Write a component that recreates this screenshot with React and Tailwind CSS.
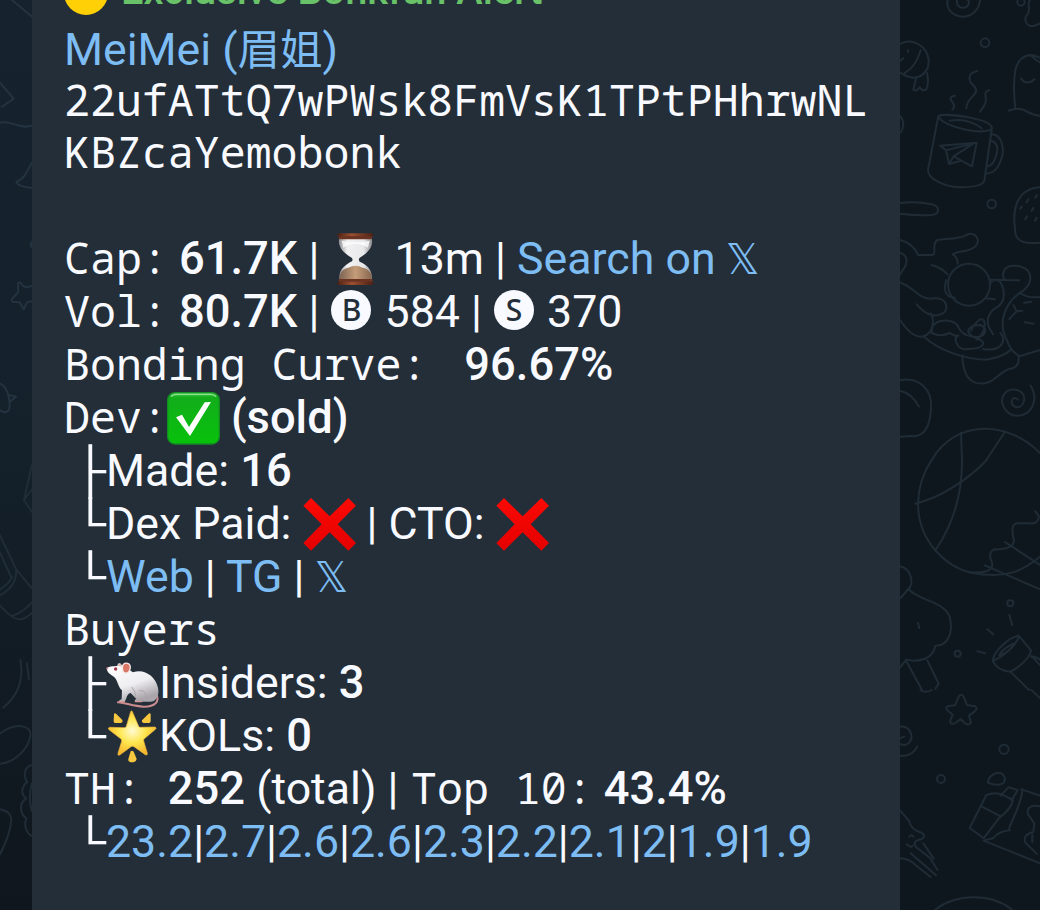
import { clsx } from "clsx";

const holders = ["23.2", "2.7", "2.6", "2.6", "2.3", "2.2", "2.1", "2", "1.9", "1.9"];

function Line({ className, children }) {
  return <div className={clsx("whitespace-pre", className || "h-[53px]")}>{children}</div>;
}

function Mono({ className, children }) {
  return <span className={clsx("font-['Noto_Sans_Mono','DejaVu_Sans_Mono',monospace] text-[43.25px] leading-none", className)}>{children}</span>;
}

function Bold({ className, children }) {
  return <span className={clsx("text-[45.3px] leading-none font-medium", className)}>{children}</span>;
}

function Link({ className, children }) {
  return <a className={clsx("text-[#7dbdf3]", className)}>{children}</a>;
}

function XMark() {
  return <span className="ml-[-1px] inline-block w-[31px] font-['DejaVu_Sans',sans-serif] text-[42px] leading-none">𝕏</span>;
}

function Branch({ children }) {
  return (
    <span className="ml-[18px] inline-block w-[24px] origin-right scale-x-[1.3] scale-y-[1.12] font-['Noto_Sans_Mono','DejaVu_Sans_Mono',monospace] text-[40px] leading-none">
      {children}
    </span>
  );
}

function Badge({ children }) {
  return (
    <span className="mr-[2px] ml-[1px] inline-flex h-10 w-10 items-center justify-center rounded-full bg-[#f8faff] align-[6px] font-['Noto_Sans',sans-serif] text-[30px] leading-none font-medium text-[#232e39]">
      {children}
    </span>
  );
}

function Emoji({ className, children }) {
  return (
    <svg viewBox="0 0 159 159" className={clsx("inline-block h-[53px] w-[53px] align-[-12px]", className)}>
      {children}
    </svg>
  );
}

function Hourglass() {
  return (
    <Emoji>
      <defs>
        <linearGradient id="wood" x1="0" x2="1">
          <stop offset="0" stopColor="#4a2014" />
          <stop offset=".4" stopColor="#9c5030" />
          <stop offset="1" stopColor="#4a2014" />
        </linearGradient>
        <linearGradient id="glass" x1="0" x2="1">
          <stop offset="0" stopColor="#8f8f92" />
          <stop offset=".25" stopColor="#f1f1f2" />
          <stop offset=".75" stopColor="#e8e8ea" />
          <stop offset="1" stopColor="#8b8a8c" />
        </linearGradient>
        <linearGradient id="sand" x1="0" x2="1">
          <stop offset="0" stopColor="#7d6453" />
          <stop offset=".5" stopColor="#c59c79" />
          <stop offset="1" stopColor="#86674f" />
        </linearGradient>
      </defs>
      <path d="M28 16H125C132 42 111 61 89 74Q84 79 89 86C109 94 130 111 125 141H29C23 111 48 94 66 85Q70 79 65 74C43 62 21 42 28 16Z" fill="url(#glass)" />
      <path d="M29 140C26 121 38 107 55 104Q77 93 98 104C116 107 129 122 124 140Z" fill="url(#sand)" />
      <path d="M35 23Q76 33 119 23L114 44Q76 20 40 44Z" fill="#fff" opacity=".75" />
      <rect x="22" y="1" width="108" height="10" rx="5" fill="url(#wood)" />
      <rect x="26" y="10" width="100" height="9" rx="4" fill="#6b3321" />
      <rect x="26" y="138" width="102" height="9" rx="4" fill="#6b3321" />
      <rect x="22" y="146" width="108" height="10" rx="5" fill="url(#wood)" />
    </Emoji>
  );
}

function Check() {
  return (
    <Emoji className="ml-[-1px]">
      <defs>
        <linearGradient id="green" x1="0" y1="0" x2="0" y2="1">
          <stop offset="0" stopColor="#4cc84f" />
          <stop offset=".1" stopColor="#12ad1b" />
          <stop offset="1" stopColor="#08c20b" />
        </linearGradient>
      </defs>
      <rect x="2" y="2" width="155" height="154" rx="22" fill="url(#green)" stroke="#138c23" strokeWidth="4" />
      <path d="M13 14Q17 7 28 7H131Q142 7 147 14" fill="none" stroke="#8be28d" strokeWidth="4" />
      <path d="M27 76L45 68L66 105L113 31L132 30L69 132Z" fill="#fff" />
    </Emoji>
  );
}

function Cross() {
  return (
    <Emoji>
      <defs>
        <linearGradient id="red" x1="0" y1="0" x2="0" y2="1">
          <stop offset="0" stopColor="#fb0a04" />
          <stop offset="1" stopColor="#e40000" />
        </linearGradient>
      </defs>
      <path d="M24 0L80 55L136 0L159 23L104 79L159 135L136 158L80 103L24 158L1 135L56 79L1 23Z" fill="url(#red)" />
    </Emoji>
  );
}

function Mouse() {
  return (
    <Emoji>
      <defs>
        <linearGradient id="fur" x1="0" y1="0" x2=".5" y2="1">
          <stop offset="0" stopColor="#fff" />
          <stop offset=".6" stopColor="#eeedf0" />
          <stop offset="1" stopColor="#a9a5ab" />
        </linearGradient>
      </defs>
      <path d="M151 112C162 133 147 150 112 149C82 147 60 138 36 136" fill="none" stroke="#c98b8e" strokeWidth="6" strokeLinecap="round" />
      <path d="M38 35C30 18 43 15 49 28" fill="#e5b3ac" stroke="#f4eeee" strokeWidth="3" />
      <path d="M2 34C8 29 25 26 44 28C56 30 68 37 81 46C113 34 148 56 156 92C161 116 150 135 132 134L88 134Q83 130 91 126L74 108Q64 110 61 124L56 135H39Q38 129 47 127L48 100C38 91 36 77 29 65C20 54 4 52 2 34Z" fill="url(#fur)" />
      <path d="M77 90Q91 105 89 123M99 101Q119 98 120 119" fill="none" stroke="#aaa5aa" strokeWidth="3" />
      <path d="M50 40C46 23 55 16 65 19C78 23 73 45 62 48Q53 50 50 40Z" fill="#db7767" stroke="#f6e8e7" strokeWidth="4" />
      <circle cx="29" cy="36" r="5" fill="#a63245" />
      <circle cx="4" cy="34" r="3" fill="#d8888b" />
      <path d="M40 134H55M88 134H107" stroke="#d99995" strokeWidth="4" strokeLinecap="round" />
    </Emoji>
  );
}

function GlowingStar() {
  return (
    <Emoji>
      <defs>
        <radialGradient id="gold" cx=".5" cy=".45" r=".55">
          <stop offset="0" stopColor="#fffbd4" />
          <stop offset=".5" stopColor="#ffe64e" />
          <stop offset="1" stopColor="#f5b52d" />
        </radialGradient>
      </defs>
      <path d="M79 5L98 49Q99 52 103 52L147 51Q154 54 147 59L115 86Q112 89 113 93L124 130Q125 137 118 134L84 110Q79 107 75 110L41 135Q34 138 36 130L47 94Q48 89 44 86L9 59Q4 54 11 52L55 53Q59 53 61 49L74 5Q77 0 79 5Z" fill="url(#gold)" stroke="#f0b73c" strokeWidth="2" />
      <path d="M24 12Q26 7 31 12L49 30Q52 38 43 39L27 39Q23 39 23 33ZM134 12Q132 7 127 12L108 31Q106 38 114 39L130 39Q134 38 134 32ZM74 124Q79 120 83 125L92 147Q91 155 83 157H74Q66 155 67 147Z" fill="#f7c83f" />
    </Emoji>
  );
}

// faint outline drawings of the chat wallpaper, each group drawn at 3x
function Wallpaper() {
  return (
    <svg viewBox="0 0 1040 910" className="absolute inset-0 h-[910px] w-[1040px]" fill="none" strokeLinecap="round" strokeLinejoin="round">
      <g stroke="#1f2b35" strokeWidth="6">
        <g transform="translate(895 0) scale(.3333)">
          <path d="M158 0C151 30 179 52 207 50C238 47 253 24 255 0M186 0C181 28 218 31 222 8Q222 0 217 0" />
          <circle cx="378" cy="6" r="11" />
          <path d="M405 0C395 10 408 28 398 43C382 58 397 81 416 78Q425 76 435 70" />
          <circle cx="270" cy="128" r="13" />
          <path d="M15 132C44 115 83 130 97 163C111 202 87 233 53 233Q33 230 15 218M77 151Q61 203 29 219M15 183L25 175M39 151V156M64 232L55 269Q65 276 74 262Q81 275 94 268Q103 250 96 219" />
          <path d="M247 213C214 220 220 244 239 260C257 286 214 289 214 325M283 271C262 274 276 291 272 307Q268 319 255 335M180 287C157 291 169 301 176 312Q180 322 172 329" />
          <path d="M130 348C155 338 288 356 291 384C279 410 140 382 130 348L99 510C98 536 147 560 193 562Q264 561 268 542L291 384M164 362Q219 353 260 385M287 403C320 401 332 447 317 483Q302 523 272 520M284 422C308 422 311 449 302 471Q294 497 277 499" />
          <path d="M135 437L245 428L231 499L199 482L162 492L153 451ZM153 451L235 431L176 469L199 482M176 469L162 492" />
          <path d="M435 174C405 155 370 169 361 210Q353 260 361 325M410 168Q420 180 435 187M378 236Q395 259 419 237M341 332Q374 319 398 336Q420 347 435 347M15 348Q33 367 18 397" />
          <path d="M15 609Q62 603 110 613C138 620 134 643 107 645Q66 647 15 641" />
          <circle cx="290" cy="612" r="13" />
          <path d="M361 690C350 631 365 566 435 562M395 607L400 598M421 593L426 585M376 626L380 620M410 633L415 624M391 658L396 649M420 662L425 653" />
        </g>
        <g transform="translate(895 230) scale(.3333)">
          <path d="M15 30Q53 39 70 75H112C127 74 108 40 128 30C162 23 190 30 214 15C239 3 258 28 243 47C224 70 195 58 173 73Q188 82 188 101M15 68Q43 79 31 108L15 134" />
          <circle cx="222" cy="164" r="63" />
          <path d="M110 105Q138 112 158 133M154 150Q142 185 162 199L180 204M15 158C54 166 71 214 119 205C160 202 164 247 137 253C105 265 81 241 65 223M15 270C36 301 62 325 85 319C120 308 117 264 107 251M85 319C137 366 213 387 272 389Q319 385 350 358" />
          <path d="M284 163Q291 145 314 153C332 181 332 218 305 232C281 244 272 274 283 294L294 313M283 149L372 151M374 189C422 163 417 105 353 107C323 108 319 140 330 149M374 189Q402 206 435 201M374 189C328 222 307 281 337 333Q345 362 374 379L435 360M273 205L300 208" />
          <path d="M111 291C130 261 184 267 193 297Q204 315 228 319C272 329 283 295 256 285C224 285 203 304 239 323C283 334 266 358 219 357Q193 362 183 336Q179 317 190 316M228 302Q253 256 267 272Q276 300 246 329M264 357C314 366 338 336 316 309M112 291L110 309Q137 322 163 309L187 320M202 376Q204 447 241 458C290 472 306 430 342 417Q374 414 371 380" />
          <path d="M356 226L365 244L382 242M365 244L343 267M387 218L409 215M389 277L416 281M360 0C360 35 390 43 435 38" />
          <path d="M15 451C71 438 113 480 108 534C105 601 81 622 48 618L15 620M15 482Q51 490 72 530" />
          <path d="M407 467C434 512 407 557 368 557C332 558 309 515 329 490C350 465 397 483 386 516C378 542 344 532 351 510Q357 498 368 509" />
          <path d="M110 690C184 564 340 573 435 669M198 608L201 690M331 604L274 690" />
        </g>
        <g transform="translate(895 460) scale(.3333)">
          <path d="M110 0C56 82 52 191 121 271Q169 325 229 338C337 360 385 330 435 290M201 0C202 87 181 183 121 271M61 131C142 112 224 54 275 0" />
          <path d="M224 337Q299 342 291 308C281 288 286 273 296 268C330 270 356 261 357 243Q345 194 365 190H403Q430 193 432 169L421 154M330 246L435 315M270 316L435 388" />
          <path d="M15 319C51 327 57 374 40 387C74 424 147 423 164 471C177 521 156 558 121 557C115 597 73 608 34 599L15 623M40 387L17 414M34 604L73 675L81 690M97 601L131 671L121 686M69 488L73 505" />
          <circle cx="188" cy="581" r="9" />
          <circle cx="346" cy="430" r="9" />
          <path d="M293 603C320 593 369 553 371 527C343 533 297 570 293 603Q308 632 346 635C374 622 406 591 408 571L371 527M313 585Q326 562 361 549Q342 580 313 585M346 635L402 690M410 588L435 615M343 465L352 496M277 508L295 523M247 574L270 580M408 590Q423 588 435 599" />
        </g>
        <g transform="translate(895 690) scale(.3333)">
          <path d="M191 20Q200 8 207 22L216 45L240 49Q250 55 239 64L222 77L228 98Q221 108 209 99L197 87L181 99Q168 107 165 94L173 74L156 60Q149 50 162 48L180 46ZM76 0Q93 11 110 0M15 110C43 108 56 134 46 153Q34 171 15 162M15 198Q54 199 67 169M15 145L28 140" />
          <circle cx="327" cy="178" r="14" />
          <circle cx="138" cy="267" r="12" />
          <path d="M279 278C279 257 306 243 321 251Q337 265 324 280Q305 290 279 278M274 315Q306 303 330 318L354 330Q349 357 313 383Q288 416 266 445L224 414ZM261 350L313 377M317 317L340 292L368 300L350 331M382 298C380 352 333 416 344 421Q311 424 294 445L266 452L435 520M379 298L435 317M435 349Q395 342 398 371L418 401L415 426Q384 433 390 457L425 491M412 435V457" />
          <path d="M15 361L42 393Q49 421 80 428Q95 439 79 448Q49 453 64 472L105 504L128 540M85 460L116 506M47 490L123 556M15 505Q43 505 66 529L107 561M35 463Q49 476 53 466M43 440Q49 432 55 440M120 660C182 611 288 608 352 660M409 0L435 24" />
        </g>
      </g>
      <g stroke="#243340" strokeWidth="6">
        <g transform="scale(.3333)">
          <path d="M36 0L96 50M0 248L41 296L5 321M0 368C33 359 61 390 96 377M96 488L77 521Q72 535 49 546Q53 560 96 564M96 725Q88 733 96 743M54 850Q59 843 67 856L79 862L96 858M54 850L55 876L36 897Q32 907 45 906L59 907L71 928L81 907L96 904M0 1150C23 1160 31 1198 28 1228Q18 1245 0 1230M29 1186L48 1190L31 1204" />
        </g>
        <g transform="translate(0 450) scale(.3333)" stroke="#202d37">
          <path d="M96 45L72 150L96 186M74 147L96 118M0 256L49 359L96 415M0 308L34 382M0 436Q50 410 49 359M0 418Q32 398 36 380M0 467Q38 508 58 508Q73 509 96 489M35 498Q65 490 96 457M61 630Q77 718 10 773M81 640L87 688M0 851C48 815 95 825 91 858C83 903 38 940 0 941M96 945C70 950 70 980 82 997C62 1009 63 1036 79 1045C55 1060 61 1093 79 1105C70 1128 81 1152 96 1158M96 999Q83 1043 96 1084M0 1078Q35 1085 34 1110Q31 1152 0 1213" />
        </g>
      </g>
    </svg>
  );
}

export default function App() {
  return (
    <div className="relative flex h-[910px] w-[1040px] overflow-hidden bg-[linear-gradient(90deg,transparent_50%,#0e171e_50%),linear-gradient(180deg,#16232e,#14202a_50%,#0f161d)]">
      <Wallpaper />
      <main className="relative ml-8 h-[910px] w-[868px] overflow-hidden bg-[#232e39] pl-8 font-['Roboto','Noto_Sans_CJK_SC',sans-serif] text-[44.7px] leading-[53px] text-[#f8faff]">
        <div className="flex h-6 items-end gap-[13px] pb-[9px]">
          <span className="h-11 w-11 shrink-0 rounded-full bg-[#ffd005]" />
          <span className="whitespace-pre text-[39.8px] leading-[48px] font-medium text-[#69c168]">Exclusive Bonkfun Alert</span>
        </div>
        <Line className="h-[51px]">
          <Link>MeiMei (<span className="text-[42.5px] leading-none">眉姐</span>)</Link>
        </Line>
        <Line className="h-[52px]"><Mono>22ufATtQ7wPWsk8FmVsK1TPtPHhrwNL</Mono></Line>
        <Line className="h-[106px]"><Mono>KBZcaYemobonk</Mono></Line>
        <Line>
          <Mono>Cap:</Mono> <Bold>61.7K</Bold> | <Hourglass /> 13m | <Link>Search on <XMark /></Link>
        </Line>
        <Line>
          <Mono>Vol:</Mono> <Bold>80.7K</Bold> | <Badge>B</Badge> 584 | <Badge>S</Badge> 370
        </Line>
        <Line>
          <Mono>Bonding Curve: </Mono> <Bold>96.67%</Bold>
        </Line>
        <Line>
          <Mono>Dev:</Mono><Check /> <Bold>(sold)</Bold>
        </Line>
        <Line>
          <Branch>├</Branch>Made: <Bold>16</Bold>
        </Line>
        <Line>
          <Branch>└</Branch>Dex Paid: <Cross /> | CTO: <Cross />
        </Line>
        <Line>
          <Branch>└</Branch><Link>Web</Link> | <Link>TG</Link> | <Link><XMark /></Link>
        </Line>
        <Line><Mono>Buyers</Mono></Line>
        <Line>
          <Branch>├</Branch><Mouse />Insiders: <Bold>3</Bold>
        </Line>
        <Line>
          <Branch>└</Branch><GlowingStar />KOLs: <Bold>0</Bold>
        </Line>
        <Line>
          <Mono>TH: </Mono><Bold>252</Bold> (total) | <Mono className="ml-[1.5px]">Top 10:</Mono> <Bold>43.4%</Bold>
        </Line>
        <Line>
          <Branch>└</Branch>
          {holders.map((share, i) => (
            <span key={i}>{i > 0 && "|"}<Link>{share}</Link></span>
          ))}
        </Line>
      </main>
    </div>
  );
}
